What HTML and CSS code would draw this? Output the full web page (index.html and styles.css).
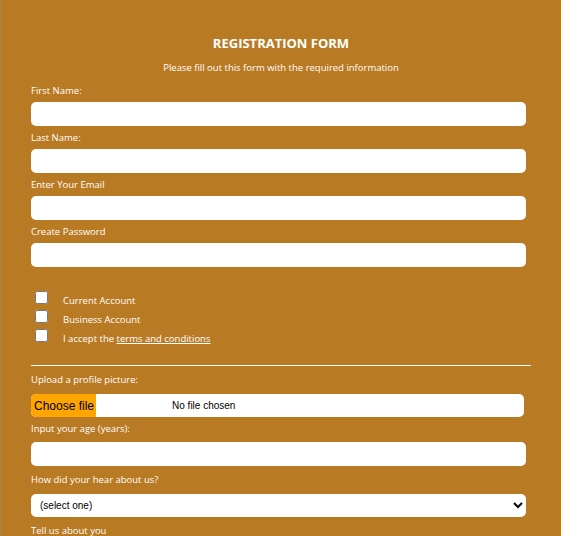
FILE: index.html
```html
<!DOCTYPE html>
<html lang="en">
<head>
<meta charset="utf-8">
<title>Registration Form</title>
<link rel="stylesheet" href="styles.css">
</head>
<body>
<main class="page">
  <h1 class="title">REGISTRATION FORM</h1>
  <p class="subtitle">Please fill out this form with the required information</p>
  <form class="form">
    <label class="label" for="first">First Name:</label>
    <input class="field" id="first" type="text">
    <label class="label" for="last">Last Name:</label>
    <input class="field" id="last" type="text">
    <label class="label" for="email">Enter Your Email</label>
    <input class="field" id="email" type="email">
    <label class="label" for="pw">Create Password</label>
    <input class="field" id="pw" type="password">

    <div class="checks">
      <label class="check"><input type="checkbox" class="box"><span class="check-text">Current Account</span></label>
      <label class="check"><input type="checkbox" class="box"><span class="check-text">Business Account</span></label>
      <label class="check"><input type="checkbox" class="box"><span class="check-text">I accept the <a href="#" class="link">terms and conditions</a></span></label>
    </div>

    <hr class="rule">

    <label class="label" for="pic">Upload a profile picture:</label>
    <label class="file" for="pic">
      <input class="file-input" id="pic" type="file">
      <span class="file-btn">Choose file</span>
      <span class="file-name">No file chosen</span>
    </label>
    <label class="label" for="age">Input your age (years):</label>
    <input class="field field-age" id="age" type="number">
    <label class="label" for="hear">How did your hear about us?</label>
    <select class="select" id="hear">
      <option>(select one)</option>
      <option>Friend</option>
      <option>Social media</option>
    </select>
    <label class="label" for="about">Tell us about you</label>
    <textarea class="area" id="about"></textarea>
  </form>
</main>
</body>
</html>
```

FILE: styles.css
```css
html, body {
  margin: 0;
  padding: 0;
}
body {
  background: #b97a24;
  color: #fff;
  font-family: "Open Sans", "Noto Sans", sans-serif;
  font-size: 9.5px;
  border-left: 1px solid #a7834f;
}
.page {
  padding: 30px 0 0 30px;
}
.title {
  margin: 0;
  text-align: center;
  font-size: 13px;
  line-height: 26px;
  font-weight: 700;
  padding-right: 30px;
}
.subtitle {
  margin: 5px 0 0;
  text-align: center;
  font-size: 9.5px;
  line-height: 14px;
  padding-right: 30px;
}
.form {
  width: 500px;
  display: flex;
  flex-direction: column;
  align-items: flex-start;
  margin-top: 9px;
}
.label {
  display: block;
  line-height: 14px;
  margin: 0 0 4px;
}
.field, .select, .area {
  box-sizing: border-box;
  width: 495px;
  height: 24px;
  border: none;
  border-radius: 5px;
  background: #fff;
  margin: 0 0 5px;
  padding: 0 8px;
  font-family: "Liberation Sans", Arial, sans-serif;
  font-size: 10px;
}
.checks {
  display: flex;
  flex-direction: column;
  gap: 3px;
  margin-top: 19px;
}
.check {
  display: flex;
  align-items: flex-start;
  line-height: 13px;
}
.box {
  width: 13px;
  height: 13px;
  margin: 0 15px 0 4px;
}
.check-text {
  margin-top: 3px;
}
.link {
  color: #fff;
}
.rule {
  width: 500px;
  box-sizing: border-box;
  border: none;
  border-top: 1px solid #fff;
  margin: 20px 0 7px;
}
.file {
  box-sizing: border-box;
  display: flex;
  align-items: center;
  width: 493px;
  height: 23px;
  background: #fff;
  border-radius: 5px;
  color: #000;
  font-family: "Liberation Sans", Arial, sans-serif;
  font-size: 10px;
  margin: 3px 0 5px;
  overflow: hidden;
}
.file-input {
  display: none;
}
.file-btn {
  display: flex;
  align-items: center;
  height: 100%;
  background: #ffa500;
  padding: 0 2px 0 3px;
  font-size: 12px;
  margin-right: 76px;
}
.field-age {
  margin-top: 2px;
  margin-bottom: 7px;
}
.select {
  height: 23px;
  margin-top: 3px;
  margin-bottom: 7px;
  padding: 0 4px 0 5px;
  color: #000;
}
.area {
  height: 60px;
}
```
